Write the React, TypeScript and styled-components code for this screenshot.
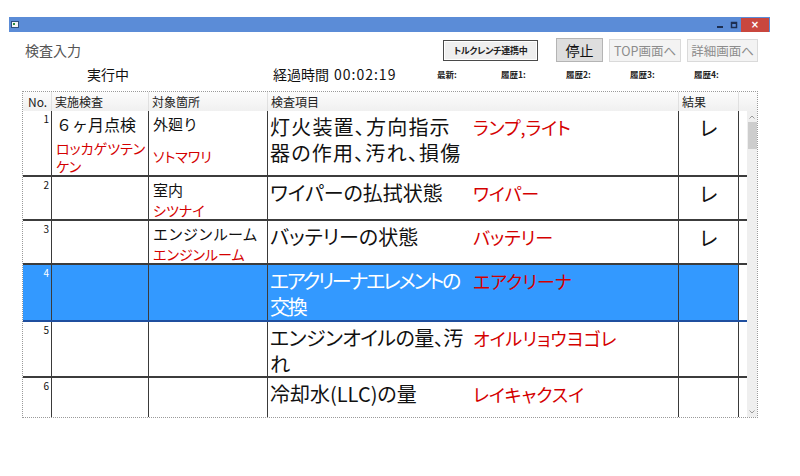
import styled, { createGlobalStyle } from "styled-components";

const GlobalStyle = createGlobalStyle`
  html, body {
    margin: 0;
    padding: 0;
    background: #ffffff;
  }
  body {
    font-family: "Noto Sans CJK JP", "Noto Sans", sans-serif;
    color: #111;
  }
`;

const COLS = "28px 97px 119px 411px 60px 1fr";

const Window = styled.div`
  margin: 17px 0 0 9px;
  width: 761px;
`;

const TitleBar = styled.div`
  height: 15px;
  background: #5b8cd7;
  display: flex;
  align-items: center;
  padding-left: 2px;
`;

const TitleSpacer = styled.div`
  flex: 1;
`;

const CtrlBox = styled.div`
  width: 14px;
  height: 15px;
  display: flex;
  align-items: center;
  justify-content: center;
`;

const CloseBox = styled.div`
  width: 28px;
  height: 14px;
  margin-right: 1px;
  background: #c9473e;
  color: #fff;
  font-family: "DejaVu Sans", sans-serif;
  font-size: 10px;
  font-weight: bold;
  line-height: 14px;
  text-align: center;
`;

const Toolbar = styled.div`
  margin-top: 6px;
  height: 24px;
  display: flex;
  align-items: center;
  padding: 0 12px 0 16px;
`;

const ScreenTitle = styled.div`
  flex: 1;
  font-size: 14px;
  color: #555;
`;

const LinkButton = styled.div`
  width: 95px;
  height: 21px;
  box-sizing: border-box;
  margin-right: 18px;
  border: 1px solid #4a4a4a;
  box-shadow: inset 0 0 0 1px #ffffff;
  background: #efefef;
  display: flex;
  align-items: center;
  justify-content: center;
  font-size: 9px;
  font-weight: bold;
  font-feature-settings: "palt";
  letter-spacing: -0.3px;
  color: #222;
`;

const ActionButton = styled.div<{ $w: number; $active?: boolean }>`
  width: ${(p) => p.$w}px;
  height: ${(p) => (p.$active ? 24 : 23)}px;
  box-sizing: border-box;
  margin-left: ${(p) => (p.$active ? 0 : 6)}px;
  border: 1px solid ${(p) => (p.$active ? "#b4b4b4" : "#dadada")};
  background: ${(p) => (p.$active ? "#dedede" : "#f3f3f3")};
  color: ${(p) => (p.$active ? "#111" : "#8c8c8c")};
  font-size: ${(p) => (p.$active ? 14 : 12.5)}px;
  display: flex;
  align-items: center;
  justify-content: center;
  white-space: nowrap;
`;

const StatusRow = styled.div`
  margin-top: 5px;
  height: 14px;
  display: grid;
  grid-template-columns: 78px 186px 164px 64px 65px 64px 64px 1fr;
  align-items: center;
`;

const StatusText = styled.div`
  font-size: 14px;
  line-height: 14px;
  color: #111;
  white-space: nowrap;
`;

const Clock = styled.span`
  margin-left: 5px;
  letter-spacing: 1px;
`;

const HistoryLabel = styled.div`
  font-size: 8.5px;
  font-weight: bold;
  color: #222;
  white-space: nowrap;
`;

const Frame = styled.div`
  margin: 10px 0 0 13px;
  width: 736px;
  height: 327px;
  box-sizing: border-box;
  border: 1px dotted #9a9a9a;
  display: flex;
  flex-direction: column;
  overflow: hidden;
`;

const HeaderRow = styled.div`
  height: 19px;
  flex-shrink: 0;
  display: grid;
  grid-template-columns: ${COLS} 10px;
  background: linear-gradient(#fcfcfc, #f0f0f0);
`;

const HeaderCell = styled.div<{ $first?: boolean }>`
  border-left: ${(p) => (p.$first ? "none" : "1px solid #e0e0e0")};
  font-size: 12px;
  line-height: 19px;
  padding-left: ${(p) => (p.$first ? 5 : 3)}px;
  color: #222;
  white-space: nowrap;
`;

const BodyWrap = styled.div`
  flex: 1;
  display: flex;
  overflow: hidden;
`;

const RowList = styled.div`
  flex: 1;
  overflow: hidden;
`;

const Row = styled.div<{ $h: number; $selected?: boolean }>`
  height: ${(p) => p.$h}px;
  box-sizing: border-box;
  display: grid;
  grid-template-columns: ${COLS};
  border-bottom: 2px solid ${(p) => (p.$selected ? "#1f4f9f" : "#3c3c3c")};
`;

const Cell = styled.div<{ $first?: boolean; $selected?: boolean; $blank?: boolean }>`
  border-left: ${(p) => (p.$first ? "none" : "1px solid #3a3a3a")};
  background: ${(p) => (p.$selected && !p.$blank ? "#3399ff" : "#ffffff")};
  overflow: hidden;
  white-space: nowrap;
`;

const NoCell = styled(Cell)<{ $selected?: boolean }>`
  text-align: right;
  font-size: 10px;
  line-height: 12px;
  padding: 2px 2px 0 0;
  color: ${(p) => (p.$selected ? "#fff" : "#111")};
`;

const StackCell = styled(Cell)`
  padding: 3px 0 0 4px;
  display: flex;
  flex-direction: column;
`;

const MainLabel = styled.div<{ $size: number }>`
  font-size: ${(p) => p.$size}px;
  line-height: 20px;
  color: #111;
`;

const KanaLabel = styled.div<{ $gap: number }>`
  margin-top: ${(p) => p.$gap}px;
  font-size: 14px;
  line-height: 18px;
  color: #d40000;
  font-feature-settings: "palt";
`;

const ItemCell = styled(Cell)`
  display: flex;
  padding: 3px 0 0 2px;
`;

const ItemText = styled.div<{ $selected?: boolean; $tracking: number }>`
  width: 203px;
  flex-shrink: 0;
  font-size: 20px;
  line-height: 26px;
  font-feature-settings: "palt";
  letter-spacing: ${(p) => p.$tracking}px;
  color: ${(p) => (p.$selected ? "#ffffff" : "#111")};
`;

const Reading = styled.div`
  font-size: 18px;
  line-height: 26px;
  color: #d40000;
  font-feature-settings: "palt";
`;

const ResultCell = styled(Cell)`
  text-align: center;
  font-size: 20px;
  line-height: 26px;
  padding-top: 4px;
`;

const ScrollBar = styled.div`
  width: 10px;
  flex-shrink: 0;
  background: #efefef;
  display: flex;
  flex-direction: column;
  align-items: center;
`;

const ScrollArrow = styled.div`
  height: 11px;
  width: 10px;
  display: flex;
  align-items: center;
  justify-content: center;
`;

const ScrollThumb = styled.div`
  width: 9px;
  height: 27px;
  background: #cdcdcd;
`;

const ScrollFill = styled.div`
  flex: 1;
`;

type RowData = {
  no: number;
  h: number;
  plan?: string;
  planKana?: string[];
  place?: string;
  placeKana?: string;
  placeGap?: number;
  item: string[];
  tracking?: number;
  kana: string;
  result?: string;
  selected?: boolean;
};

const rows: RowData[] = [
  {
    no: 1,
    h: 66,
    plan: "６ヶ月点検",
    planKana: ["ロッカゲツテン", "ケン"],
    place: "外廻り",
    placeKana: "ソトマワリ",
    placeGap: 13,
    item: ["灯火装置、方向指示", "器の作用、汚れ、損傷"],
    tracking: 1.2,
    kana: "ランプ,ライト",
    result: "レ",
  },
  { no: 2, h: 44, place: "室内", placeKana: "シツナイ", item: ["ワイパーの払拭状態"], kana: "ワイパー", result: "レ" },
  {
    no: 3,
    h: 44,
    place: "エンジンルーム",
    placeKana: "エンジンルーム",
    item: ["バッテリーの状態"],
    kana: "バッテリー",
    result: "レ",
  },
  {
    no: 4,
    h: 57,
    item: ["エアクリーナエレメントの", "交換"],
    tracking: -2.3,
    kana: "エアクリーナ",
    selected: true,
  },
  { no: 5, h: 56, item: ["エンジンオイルの量、汚", "れ"], tracking: -0.5, kana: "オイルリョウヨゴレ" },
  { no: 6, h: 56, item: ["冷却水(LLC)の量"], kana: "レイキャクスイ" },
];

const history = ["最新:", "履歴1:", "履歴2:", "履歴3:", "履歴4:"];

function WindowIcon() {
  return (
    <svg width="8" height="7" viewBox="0 0 8 7">
      <rect x="0.5" y="0.5" width="7" height="6" fill="#f4f4f4" stroke="#2d4f80" strokeWidth="1" />
      <rect x="2" y="2" width="2" height="2" fill="#2c8a3c" />
    </svg>
  );
}

function Chevron({ up }: { up?: boolean }) {
  return (
    <svg width="6" height="4" viewBox="0 0 6 4">
      <path d={up ? "M0.5 3.5 L3 1 L5.5 3.5" : "M0.5 0.5 L3 3 L5.5 0.5"} fill="none" stroke="#9a9a9a" strokeWidth="1" />
    </svg>
  );
}

export default function App() {
  return (
    <>
      <GlobalStyle />
      <Window>
        <TitleBar>
          <WindowIcon />
          <TitleSpacer />
          <CtrlBox>
            <svg width="7" height="8" viewBox="0 0 7 8">
              <rect x="0" y="5" width="6" height="2" fill="#1d2f52" />
            </svg>
          </CtrlBox>
          <CtrlBox>
            <svg width="8" height="8" viewBox="0 0 8 8">
              <rect x="1.5" y="1.5" width="5" height="5" fill="none" stroke="#1d2f52" strokeWidth="1.5" />
              <rect x="1" y="1" width="6" height="2" fill="#1d2f52" />
            </svg>
          </CtrlBox>
          <CloseBox>×</CloseBox>
        </TitleBar>

        <Toolbar>
          <ScreenTitle>検査入力</ScreenTitle>
          <LinkButton>トルクレンチ連携中</LinkButton>
          <ActionButton $w={47} $active>
            停止
          </ActionButton>
          <ActionButton $w={72}>TOP画面へ</ActionButton>
          <ActionButton $w={71}>詳細画面へ</ActionButton>
        </Toolbar>

        <StatusRow>
          <div />
          <StatusText>実行中</StatusText>
          <StatusText>
            経過時間<Clock>00:02:19</Clock>
          </StatusText>
          {history.map((h) => (
            <HistoryLabel key={h}>{h}</HistoryLabel>
          ))}
        </StatusRow>

        <Frame>
          <HeaderRow>
            <HeaderCell $first>No.</HeaderCell>
            <HeaderCell>実施検査</HeaderCell>
            <HeaderCell>対象箇所</HeaderCell>
            <HeaderCell>検査項目</HeaderCell>
            <HeaderCell>結果</HeaderCell>
            <HeaderCell />
            <div />
          </HeaderRow>
          <BodyWrap>
            <RowList>
              {rows.map((r) => (
                <Row key={r.no} $h={r.h} $selected={r.selected}>
                  <NoCell $first $selected={r.selected}>
                    {r.no}
                  </NoCell>
                  <StackCell $selected={r.selected}>
                    {r.plan && <MainLabel $size={16}>{r.plan}</MainLabel>}
                    {r.planKana && (
                      <KanaLabel $gap={5}>
                        {r.planKana.map((k) => (
                          <div key={k}>{k}</div>
                        ))}
                      </KanaLabel>
                    )}
                  </StackCell>
                  <StackCell $selected={r.selected}>
                    {r.place && <MainLabel $size={15}>{r.place}</MainLabel>}
                    {r.placeKana && <KanaLabel $gap={r.placeGap ?? 1}>{r.placeKana}</KanaLabel>}
                  </StackCell>
                  <ItemCell $selected={r.selected}>
                    <ItemText $selected={r.selected} $tracking={r.tracking ?? 0}>
                      {r.item.map((line) => (
                        <div key={line}>{line}</div>
                      ))}
                    </ItemText>
                    <Reading>{r.kana}</Reading>
                  </ItemCell>
                  <ResultCell $selected={r.selected}>{r.result}</ResultCell>
                  <Cell $blank />
                </Row>
              ))}
            </RowList>
            <ScrollBar>
              <ScrollArrow>
                <Chevron up />
              </ScrollArrow>
              <ScrollThumb />
              <ScrollFill />
              <ScrollArrow>
                <Chevron />
              </ScrollArrow>
            </ScrollBar>
          </BodyWrap>
        </Frame>
      </Window>
    </>
  );
}
